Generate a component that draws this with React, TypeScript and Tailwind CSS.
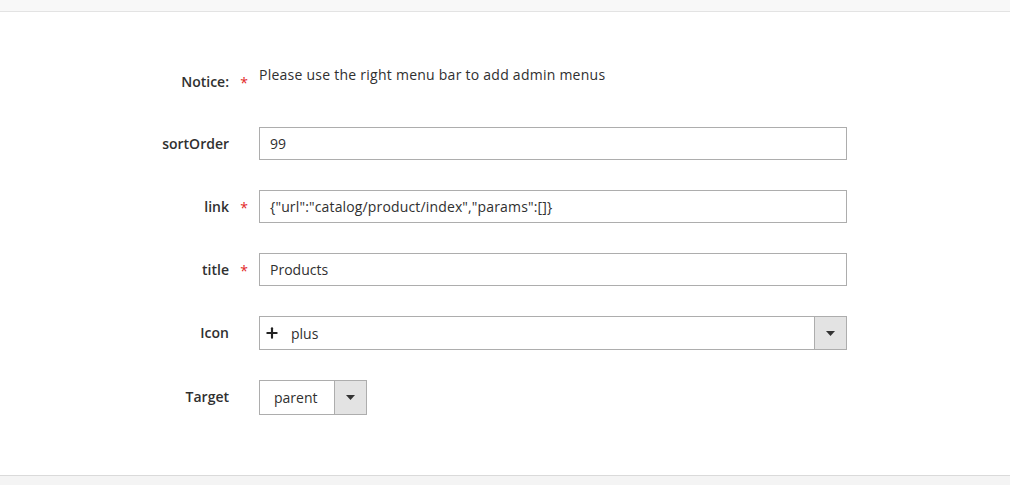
import { Plus } from "lucide-react";

const font = { fontFamily: '"Open Sans", "Liberation Sans", sans-serif' };

function Row({ label, required, children }: { label: string; required?: boolean; children: React.ReactNode }) {
  return (
    <div className="flex items-start">
      <label className="w-[229px] shrink-0 pt-[7px] text-right text-[14px] font-semibold leading-[19px] text-[#303030]">
        {label}
      </label>
      <span className="w-[30px] shrink-0 pt-[8px] text-center text-[14px] leading-[19px] text-[#e22626]">
        {required ? "*" : ""}
      </span>
      <div className="min-w-0">{children}</div>
    </div>
  );
}

function Arrow() {
  return (
    <div className="flex h-full w-[32px] shrink-0 items-center justify-center border-l border-[#adadad] bg-[#e3e3e3]">
      <svg width="9" height="5" viewBox="0 0 9 5">
        <path d="M0 0h9L4.5 5z" fill="#333" />
      </svg>
    </div>
  );
}

export default function App() {
  return (
    <div className="flex h-[485px] w-[1010px] flex-col bg-white" style={font}>
      <div className="h-[12px] shrink-0 border-b border-[#e3e3e3] bg-[#f8f8f8]" />

      {/* form */}
      <div className="flex flex-1 flex-col gap-[30px] pt-[53px]">
        <Row label="Notice:" required>
          <p className="text-[14px] leading-[19px] tracking-[0.25px] text-[#303030]">Please use the right menu bar to add admin menus</p>
          <div className="h-[13px]" />
        </Row>

        <Row label="sortOrder">
          <div className="flex h-[33px] w-[588px] items-center border border-[#adadad] px-[10px] text-[14px] text-[#303030]">99</div>
        </Row>

        <Row label="link" required>
          <div className="flex h-[33px] w-[588px] items-center border border-[#adadad] px-[10px] text-[14px] tracking-[0.15px] text-[#303030]">
            {'{"url":"catalog/product/index","params":[]}'}
          </div>
        </Row>

        <Row label="title" required>
          <div className="flex h-[33px] w-[588px] items-center border border-[#adadad] px-[10px] text-[14px] text-[#303030]">Products</div>
        </Row>

        <Row label="Icon">
          <div className="flex h-[34px] w-[588px] items-center border border-[#adadad] text-[14px] text-[#303030]">
            <div className="flex flex-1 items-center gap-[11px] pl-[4px]">
              <Plus size={16} strokeWidth={3.2} className="text-[#222]" />
              <span>plus</span>
            </div>
            <Arrow />
          </div>
        </Row>

        <Row label="Target">
          <div className="flex h-[35px] w-[108px] items-center border border-[#adadad] text-[14px] text-[#303030]">
            <span className="flex-1 pl-[14px]">parent</span>
            <Arrow />
          </div>
        </Row>
      </div>

      <div className="h-[10px] shrink-0 border-t border-[#dadada] bg-[#f4f4f4]" />
    </div>
  );
}
